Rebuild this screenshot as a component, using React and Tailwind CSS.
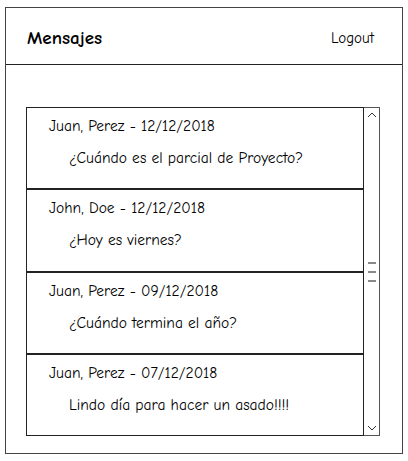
import React from "react";

const messages = [
  { author: "Juan, Perez", date: "12/12/2018", text: "¿Cuándo es el parcial de Proyecto?" },
  { author: "John, Doe", date: "12/12/2018", text: "¿Hoy es viernes?" },
  { author: "Juan, Perez", date: "09/12/2018", text: "¿Cuándo termina el año?" },
  { author: "Juan, Perez", date: "07/12/2018", text: "Lindo día para hacer un asado!!!!" },
];

const font = { fontFamily: '"Comic Sans MS", "Comic Neue", "DejaVu Sans", sans-serif' };

const App = () => {
  return (
    <div className="w-[408px] h-[461px] bg-white pt-[7px] pl-[5px]" style={font}>
      <div className="w-[398px] h-[447px] border border-[#444] flex flex-col">
        {/* Header */}
        <div className="h-[57px] border-b border-[#222] flex items-center justify-between pl-[21px] pr-[28px] pt-[3px]">
          <b className="text-[19px] leading-[24px] text-black">Mensajes</b>
          <span className="text-[15px] leading-[20px] text-black">Logout</span>
        </div>

        {/* Message list */}
        <div className="pt-[42px] pl-[20px]">
          <div className="flex w-[354px] h-[329px]">
            <div className="flex-1 border border-[#222] flex flex-col">
              {messages.map((m, i) => (
                <div
                  key={i}
                  className={
                    "flex-1 flex flex-col text-[15.5px] leading-[20px] text-black " +
                    (i > 0 ? "border-t-2 border-[#222]" : "")
                  }
                >
                  <div className="pl-[22px] pt-[8px]">
                    {m.author} - {m.date}
                  </div>
                  <div className="pl-[42px] pt-[12px]">{m.text}</div>
                </div>
              ))}
            </div>

            {/* Scrollbar */}
            <div className="w-[16px] border border-l-0 border-[#555] flex flex-col items-center justify-between py-[3px]">
              <svg width="10" height="8" viewBox="0 0 10 8">
                <path d="M1 6 L5 2 L9 6" stroke="#333" strokeWidth="1" fill="none" />
              </svg>
              <div className="flex flex-col gap-[7px]">
                <div className="w-[8px] h-[2px] bg-[#888]" />
                <div className="w-[8px] h-[2px] bg-[#888]" />
                <div className="w-[8px] h-[2px] bg-[#888]" />
              </div>
              <svg width="10" height="8" viewBox="0 0 10 8">
                <path d="M1 2 L5 6 L9 2" stroke="#333" strokeWidth="1" fill="none" />
              </svg>
            </div>
          </div>
        </div>
      </div>
    </div>
  );
};

export default App;
